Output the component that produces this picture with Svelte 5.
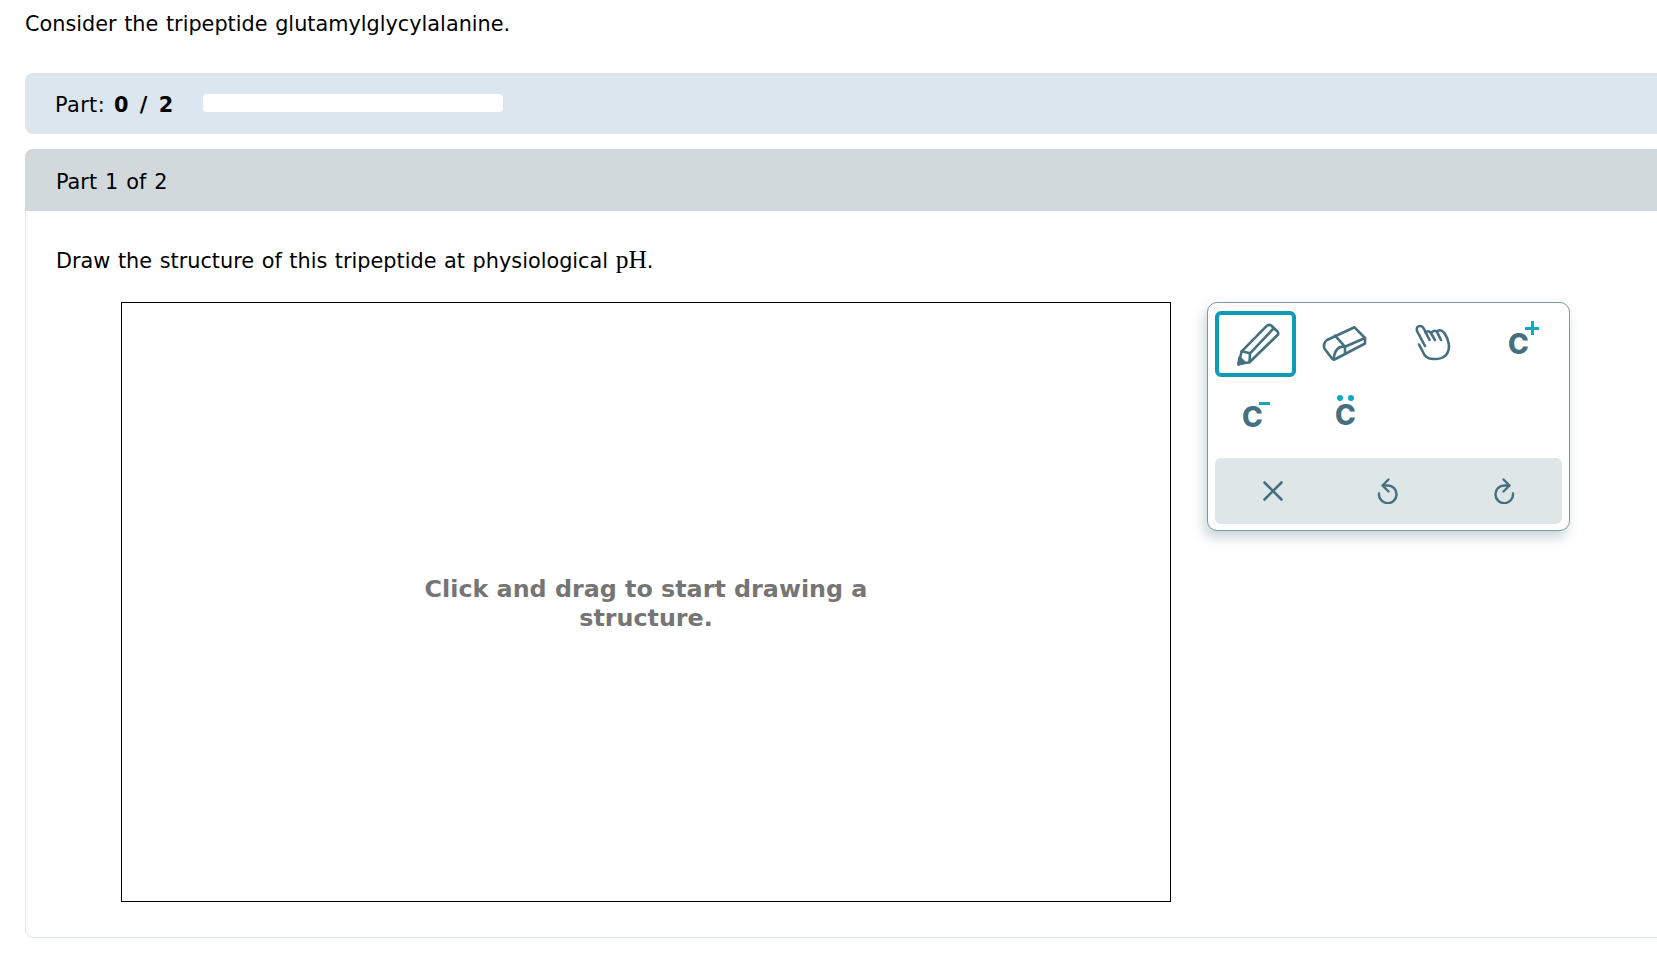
<script>
	const tools = ['pencil', 'eraser', 'hand', 'plus', 'minus', 'pair'];
</script>

<div class="page">
	<p class="intro">Consider the tripeptide glutamylglycylalanine.</p>

	<div class="progress">
		<span class="count">Part: <b>0 / 2</b></span>
		<div class="track"></div>
	</div>

	<section class="part">
		<header>Part 1 of 2</header>
		<div class="body">
			<p class="prompt">Draw the structure of this tripeptide at physiological <span class="math">pH</span>.</p>
			<div class="workspace">
				<div class="canvas">
					<div class="hint">Click and drag to start drawing a structure.</div>
				</div>
				<div class="panel">
					<div class="tools">
						{#each tools as tool, i}
							<button class="tool" class:selected={i === 0} aria-label={tool}>
								{#if tool === 'pencil'}
									<svg width="60" height="50" viewBox="0 0 60 50" fill="none" stroke="#44707f" stroke-width="2.6" stroke-linejoin="round" stroke-linecap="round">
										<path d="M12.5 45 L15.700 32.300 L41 6.700 Q43.500 5 45.500 6.700 L51.500 12.500 Q53 14.500 51.500 16 L23.500 43.300 Z" />
										<path d="M15.700 32.300 L24 34.300 L23.500 43.300 M24 34.300 L47 10" />
										<path d="M13.500 38.500 L18.500 43.500 L12.500 45.500 Z" fill="#44707f" />
									</svg>
								{:else if tool === 'eraser'}
									<svg width="60" height="50" viewBox="0 0 60 50" fill="none" stroke="#44707f" stroke-width="2.6" stroke-linejoin="round" stroke-linecap="round">
										<path d="M12 21 L39.500 8.300 L50 19 L50 24.500 L20.500 40 Q18.500 41 17 39.500 L10.500 31 Q8 28 9.500 24 Q10.500 22 12 21 Z" />
										<path d="M20 16.700 L30 27.700 L50 19 M30 27.700 L30 34.500 M30 27.700 Q20 26.500 18.500 40.500" />
									</svg>
								{:else if tool === 'hand'}
									<svg width="60" height="50" viewBox="0 0 60 50" fill="none" stroke="#44707f" stroke-width="2.6" stroke-linejoin="round" stroke-linecap="round">
										<path d="M21 27 L13 12 Q12 7.500 15.500 7 Q18.500 6.500 20 10 L25.500 21" />
										<path d="M21.500 13.500 Q24.500 11 26.500 13.500 L31 21" />
										<path d="M28 13 Q31 10.500 33 13 L37 21" />
										<path d="M33.500 12 Q37 10 40 13.500 Q45 21 45 28 Q44 40 31 40 Q24 40.500 20.500 36 Q18 31 15 25.500" />
									</svg>
								{:else if tool === 'plus'}
									<span class="atom plus">C<i class="mark"></i></span>
								{:else if tool === 'minus'}
									<span class="atom minus">C<i class="mark"></i></span>
								{:else}
									<span class="atom pair">C<i class="mark"></i></span>
								{/if}
							</button>
						{/each}
					</div>
					<div class="actions">
						<button aria-label="clear">
							<svg width="24" height="24" viewBox="0 0 24 24" fill="none" stroke="#44707f" stroke-width="2.6" stroke-linecap="round"><path d="M3.500 3.500 L20.500 20.500 M20.500 3.500 L3.500 20.500" /></svg>
						</button>
						<button aria-label="undo">
							<svg width="24" height="26" viewBox="0 0 24 26" fill="none" stroke="#44707f" stroke-width="2.4" stroke-linecap="round" stroke-linejoin="round"><path d="M6.500 7.500 H11.800 A8.800 8.800 0 1 1 3 15.500 M12.500 1.500 L6.500 7.500 L12.500 13.500" /></svg>
						</button>
						<button aria-label="redo">
							<svg width="24" height="26" viewBox="0 0 24 26" fill="none" stroke="#44707f" stroke-width="2.4" stroke-linecap="round" stroke-linejoin="round"><path d="M17.500 7.500 H12.200 A8.800 8.800 0 1 0 21 15.500 M11.500 1.500 L17.500 7.500 L11.500 13.500" /></svg>
						</button>
					</div>
				</div>
			</div>
		</div>
	</section>
</div>

<style>
	:global(body) {
		margin: 0;
		background: #fff;
		overflow: hidden;
	}

	.page {
		font-family: "DejaVu Sans", sans-serif;
		font-size: 20.8px;
		word-spacing: 1px;
		color: #000;
		width: 1700px;
		padding: 11px 0 0 25px;
		box-sizing: border-box;
	}

	.intro {
		margin: 0 0 36px;
		line-height: 26px;
	}

	.progress {
		height: 61px;
		background: #dbe6ef;
		border-radius: 8px 0 0 8px;
		display: flex;
		align-items: center;
		padding-left: 30px;
		gap: 30px;
	}

	.count {
		width: 118px;
		padding-top: 2px;
		white-space: nowrap;
		letter-spacing: 0.4px;
	}

	.count b {
		margin-left: 1px;
		letter-spacing: 0;
		word-spacing: 4px;
	}

	.track {
		width: 300px;
		height: 18px;
		margin-top: -1px;
		background: #fff;
		border-radius: 4px;
	}

	.part {
		margin-top: 15px;
		border: 1px solid #dfe6e6;
		border-radius: 8px 0 0 8px;
		height: 789px;
		box-sizing: border-box;
	}

	.part header {
		height: 62px;
		box-sizing: border-box;
		margin: -1px 0 0 -1px;
		background: #d2d9dc;
		border-radius: 8px 0 0 0;
		display: flex;
		align-items: center;
		padding: 4px 0 0 31px;
		word-spacing: 1.4px;
	}

	.body {
		padding: 36px 30px 0;
	}

	.prompt {
		margin: 0 0 28px;
		line-height: 26px;
	}

	.math {
		font-family: "Liberation Serif", serif;
		font-size: 25.5px;
	}

	.workspace {
		display: flex;
		align-items: flex-start;
		gap: 36px;
		padding-left: 65px;
	}

	.canvas {
		width: 1050px;
		height: 600px;
		box-sizing: border-box;
		border: 1px solid #000;
		padding-top: 3px;
		display: flex;
		align-items: center;
		justify-content: center;
	}

	.hint {
		width: 480px;
		text-align: center;
		font-size: 23.8px;
		font-weight: bold;
		line-height: 28.5px;
		word-spacing: 0;
		color: #757575;
	}

	.panel {
		width: 363px;
		height: 229px;
		box-sizing: border-box;
		border: 1px solid #7a98a3;
		border-radius: 10px;
		background: #fff;
		padding: 8px 7px 6px;
		box-shadow: -3px 7px 12px rgba(68, 112, 127, 0.28);
	}

	.tools {
		display: grid;
		grid-template-columns: repeat(4, 81px);
		column-gap: 8px;
		row-gap: 6px;
		height: 147px;
		align-content: start;
	}

	button {
		border: 0;
		padding: 0;
		background: none;
		display: flex;
		align-items: center;
		justify-content: center;
	}

	.tool {
		height: 66px;
		border: 4px solid transparent;
		border-radius: 6px;
		box-sizing: border-box;
	}

	.tool.selected {
		border-color: #0e9cb5;
	}

	.atom {
		position: relative;
		display: block;
		width: 19px;
		height: 18px;
		font-family: "Inter", sans-serif;
		font-weight: 800;
		font-size: 28px;
		line-height: 18px;
		text-align: center;
		color: #44707f;
	}

	.atom.plus {
		margin-left: -10px;
	}

	.atom.minus {
		margin: 2px 0 0 -8px;
	}

	.atom.pair {
		margin-top: -2px;
	}

	.mark {
		position: absolute;
		display: block;
	}

	.plus .mark {
		left: 17px;
		top: -14px;
		width: 14px;
		height: 14px;
		background:
			linear-gradient(#0fa9c6, #0fa9c6) center / 14px 3px no-repeat,
			linear-gradient(#0fa9c6, #0fa9c6) center / 3px 14px no-repeat;
	}

	.minus .mark {
		left: 17px;
		top: -6px;
		width: 11px;
		height: 3px;
		background: #0fa9c6;
	}

	.pair .mark {
		left: 2px;
		top: -11px;
		width: 6px;
		height: 6px;
		border-radius: 50%;
		background: #0fa9c6;
		box-shadow: 11px 0 0 #0fa9c6;
	}

	.actions {
		height: 66px;
		background: #dfe6e8;
		border-radius: 6px;
		display: grid;
		grid-template-columns: repeat(3, 1fr);
	}
</style>
